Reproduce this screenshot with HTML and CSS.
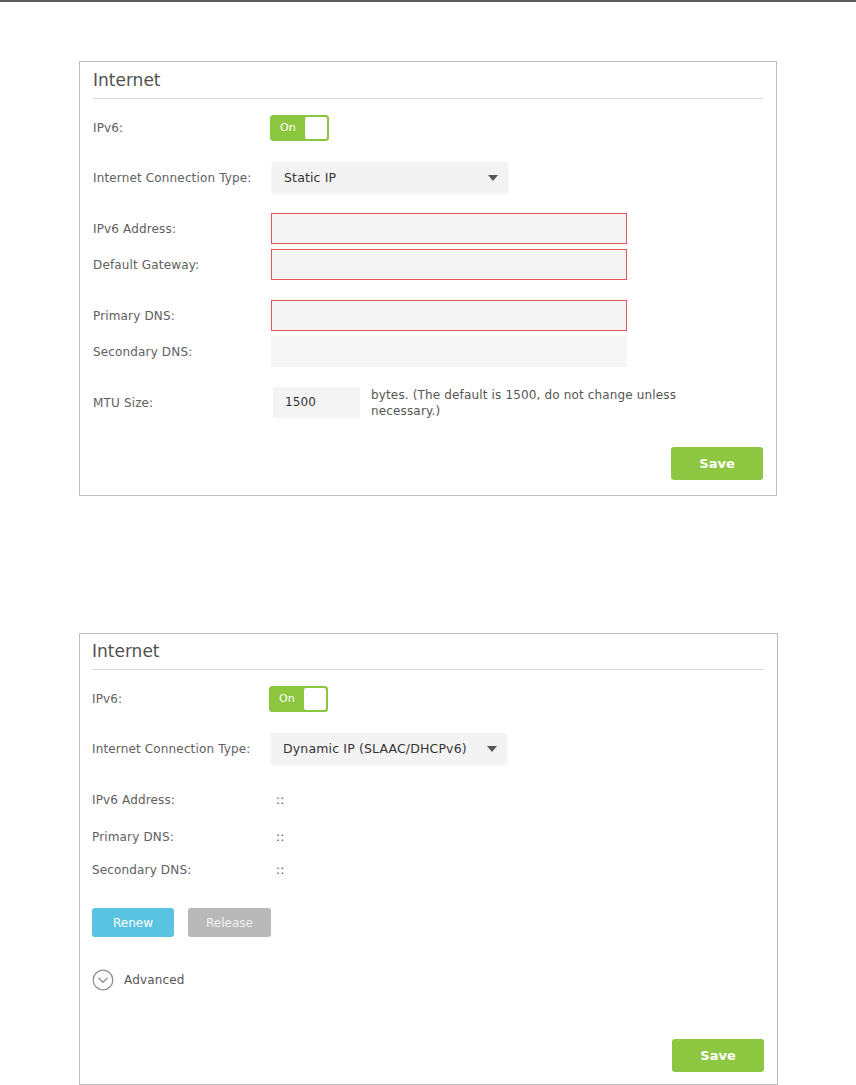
FILE: index.html
```html
<!DOCTYPE html>
<html>
<head>
<meta charset="utf-8">
<title>Internet</title>
<link rel="stylesheet" href="styles.css">
</head>
<body>
<div class="topline"></div>

<section class="panel panel-static">
  <h2 class="panel-title">Internet</h2>

  <div class="row r-toggle">
    <span class="label">IPv6:</span>
    <div class="toggle"><span class="toggle-text">On</span><span class="toggle-knob"></span></div>
  </div>

  <div class="row r-select">
    <span class="label">Internet Connection Type:</span>
    <div class="select"><span class="select-text">Static IP</span><span class="caret"></span></div>
  </div>

  <div class="row r-field gap-big">
    <span class="label">IPv6 Address:</span>
    <div class="input input-error"></div>
  </div>
  <div class="row r-field gap-small">
    <span class="label">Default Gateway:</span>
    <div class="input input-error"></div>
  </div>
  <div class="row r-field gap-big">
    <span class="label">Primary DNS:</span>
    <div class="input input-error"></div>
  </div>
  <div class="row r-field gap-small">
    <span class="label">Secondary DNS:</span>
    <div class="input input-plain"></div>
  </div>
  <div class="row r-field gap-big">
    <span class="label">MTU Size:</span>
    <div class="input input-short">1500</div>
    <span class="hint">bytes. (The default is 1500, do not change unless<br>necessary.)</span>
  </div>

  <div class="actions actions-static">
    <button class="btn btn-save">Save</button>
  </div>
</section>

<section class="panel panel-dynamic">
  <h2 class="panel-title">Internet</h2>

  <div class="row r-toggle">
    <span class="label">IPv6:</span>
    <div class="toggle"><span class="toggle-text">On</span><span class="toggle-knob"></span></div>
  </div>

  <div class="row r-select">
    <span class="label">Internet Connection Type:</span>
    <div class="select"><span class="select-text">Dynamic IP (SLAAC/DHCPv6)</span><span class="caret"></span></div>
  </div>

  <div class="row r-info info-1">
    <span class="label">IPv6 Address:</span>
    <span class="value">::</span>
  </div>
  <div class="row r-info info-2">
    <span class="label">Primary DNS:</span>
    <span class="value">::</span>
  </div>
  <div class="row r-info info-3">
    <span class="label">Secondary DNS:</span>
    <span class="value">::</span>
  </div>

  <div class="btn-row">
    <button class="btn btn-renew">Renew</button>
    <button class="btn btn-release">Release</button>
  </div>

  <div class="advanced">
    <svg class="adv-icon" width="22" height="22" viewBox="0 0 22 22">
      <circle cx="11" cy="11" r="9.8" fill="none" stroke="#8f8f8f" stroke-width="1.3"/>
      <path d="M6.8 9.2 L11 13.2 L15.2 9.2" fill="none" stroke="#8f8f8f" stroke-width="1.3" stroke-linecap="round" stroke-linejoin="round"/>
    </svg>
    <span class="adv-text">Advanced</span>
  </div>

  <div class="actions actions-dynamic">
    <button class="btn btn-save">Save</button>
  </div>
</section>
</body>
</html>
```

FILE: styles.css
```css
html, body {
  margin: 0;
  padding: 0;
  background: #ffffff;
}

body {
  font-family: "DejaVu Sans", Verdana, sans-serif;
  font-size: 12px;
  letter-spacing: 0.15px;
  color: #606060;
  height: 1085px;
  overflow: hidden;
}

.topline {
  height: 2px;
  background: #5a5a5a;
}

.panel {
  box-sizing: border-box;
  border: 1px solid #bdbdbd;
  margin-left: 79px;
  padding: 0 13px;
  background: #fff;
}

.panel-static {
  margin-top: 59px;
  width: 698px;
  height: 435px;
}

.panel-dynamic {
  margin-top: 137px;
  width: 699px;
  height: 452px;
  padding-left: 12px;
}

.panel-title {
  margin: 0;
  height: 36px;
  line-height: 36px;
  font-size: 17px;
  font-weight: normal;
  letter-spacing: 0;
  color: #505050;
  border-bottom: 1px solid #ddd6d3;
}

.panel-dynamic .panel-title {
  height: 35px;
  line-height: 34px;
}

.row {
  display: flex;
  align-items: center;
}

.label {
  width: 178px;
  flex: none;
}

.r-toggle {
  margin-top: 16px;
  height: 26px;
}

.r-toggle .label {
  width: 177px;
}

.toggle {
  box-sizing: border-box;
  width: 59px;
  height: 26px;
  display: flex;
  align-items: stretch;
  background: #8cc63f;
  border: 1px solid #8cc63f;
  border-radius: 3px;
  padding: 1px;
}

.toggle-text {
  flex: 1;
  color: #fff;
  font-size: 11px;
  line-height: 22px;
  padding-left: 8px;
}

.toggle-knob {
  width: 22px;
  background: #fff;
  border-radius: 2px;
}

.r-select {
  margin-top: 21px;
  height: 31px;
}

.select {
  box-sizing: border-box;
  width: 236px;
  height: 31px;
  margin-left: 1px;
  display: flex;
  align-items: center;
  justify-content: space-between;
  padding: 0 10px 0 12px;
  background: #f3f3f3;
  box-shadow: 0 1px 3px rgba(0, 0, 0, 0.06);
}

.select-text {
  color: #333;
  font-size: 12.5px;
}

.caret {
  width: 0;
  height: 0;
  border-left: 5px solid transparent;
  border-right: 5px solid transparent;
  border-top: 6px solid #555;
}

.r-field {
  height: 31px;
}

.gap-big {
  margin-top: 20px;
}

.gap-small {
  margin-top: 5px;
}

.input {
  box-sizing: border-box;
  width: 356px;
  height: 31px;
  background: #f4f4f4;
  border: 1px solid #f4f4f4;
}

.input.input-error {
  border-color: #e4545b;
}

.input.input-plain {
  background: #f6f6f6;
  border-color: #f6f6f6;
}

.input.input-short {
  width: 87px;
  margin-left: 2px;
  padding-left: 11px;
  line-height: 29px;
  color: #333;
}

.hint {
  margin-left: 11px;
  line-height: 16px;
  color: #555;
}

.actions {
  display: flex;
  justify-content: flex-end;
}

.actions-static {
  margin-top: 29px;
}

.actions-dynamic {
  margin-top: 48px;
}

.btn {
  font-family: "DejaVu Sans", Verdana, sans-serif;
  border: none;
  border-radius: 3px;
  color: #fff;
  padding: 0;
  cursor: pointer;
}

.btn-save {
  width: 92px;
  height: 33px;
  background: #8dc641;
  font-size: 13px;
  font-weight: bold;
  letter-spacing: 0;
}

.r-info {
  height: 20px;
}

.info-1 {
  margin-top: 26px;
}

.info-2 {
  margin-top: 17px;
}

.info-3 {
  margin-top: 13px;
}

.value {
  margin-left: 6px;
  color: #555;
}

.btn-row {
  display: flex;
  gap: 14px;
  margin-top: 28px;
}

.btn-renew,
.btn-release {
  width: 82px;
  height: 29px;
  font-size: 12px;
  letter-spacing: 0;
}

.btn-renew {
  background: #5ac3e2;
}

.btn-release {
  width: 83px;
  background: #b9b9b9;
  color: #efefef;
}

.advanced {
  display: flex;
  align-items: center;
  margin-top: 32px;
  height: 22px;
}

.adv-icon {
  display: block;
}

.adv-text {
  margin-left: 10px;
  color: #555;
}
```
